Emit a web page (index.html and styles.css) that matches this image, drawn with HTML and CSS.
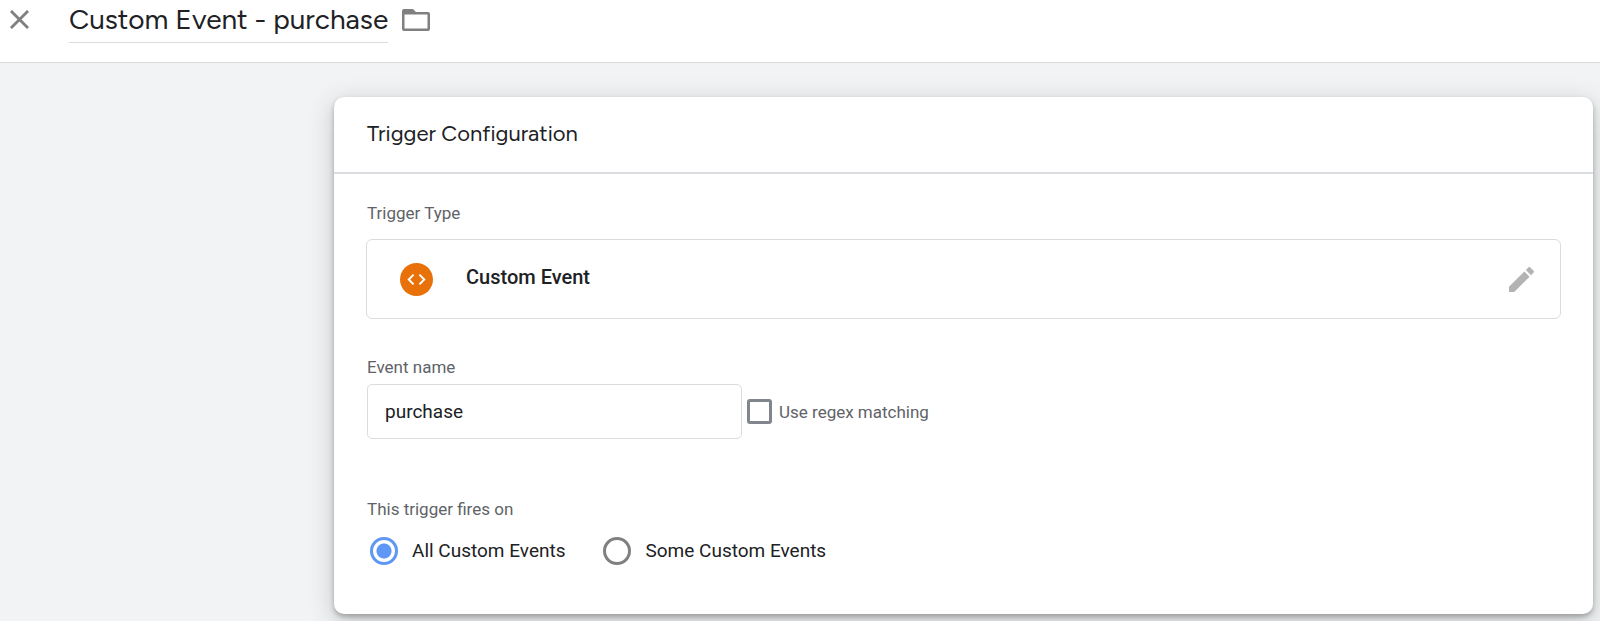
FILE: index.html
```html
<!DOCTYPE html>
<html lang="en">
<head>
<meta charset="utf-8">
<meta name="viewport" content="width=device-width, initial-scale=1">
<title>Custom Event - purchase</title>
<link rel="stylesheet" href="styles.css">
</head>
<body>
<header class="topbar">
  <button class="icon-button" type="button" aria-label="Close">
    <svg class="close-icon" viewBox="0 0 20 20" aria-hidden="true"><path d="M1 1L19 19M19 1L1 19"/></svg>
  </button>
  <h1 class="title">Custom Event - purchase</h1>
  <button class="icon-button" type="button" aria-label="Move to folder">
    <svg class="folder-icon" viewBox="0 0 28 22" aria-hidden="true"><path fill-rule="evenodd" d="M2 0H11L14 3H26Q28 3 28 5V20Q28 22 26 22H2Q0 22 0 20V2Q0 0 2 0ZM2.5 5.5V19.5H25.5V5.5Z"/></svg>
  </button>
</header>
<main class="page">
  <section class="card">
    <h2 class="card-title">Trigger Configuration</h2>
    <form class="card-body">
      <p class="label">Trigger Type</p>
      <button class="type-box" type="button">
        <svg class="type-icon" viewBox="0 0 34 34" aria-hidden="true"><circle cx="17" cy="17" r="17"/><path d="M14 12L9 17L14 22M20 12L25 17L20 22"/></svg>
        <span class="type-name">Custom Event</span>
        <svg class="edit-icon" viewBox="3 3 18 18" aria-hidden="true"><path d="M3 17.25V21h3.75L17.81 9.94l-3.75-3.75L3 17.25zM20.71 7.04c.39-.39.39-1.02 0-1.41l-2.34-2.34c-.39-.39-1.02-.39-1.41 0l-1.83 1.83 3.75 3.75 1.83-1.83z"/></svg>
      </button>
      <label class="label" for="event-name">Event name</label>
      <div class="event-row">
        <input class="text-input" id="event-name" type="text" value="purchase">
        <input class="checkbox" id="regex" type="checkbox">
        <label class="label" for="regex">Use regex matching</label>
      </div>
      <fieldset class="fires">
        <legend class="label">This trigger fires on</legend>
        <div class="options">
          <label class="option"><input class="radio" type="radio" name="fires" checked>All Custom Events</label>
          <label class="option"><input class="radio" type="radio" name="fires">Some Custom Events</label>
        </div>
      </fieldset>
    </form>
  </section>
</main>
</body>
</html>
```
FILE: styles.css
```css
* {
  box-sizing: border-box;
}

body {
  display: flex;
  flex-direction: column;
  min-height: 100vh;
  margin: 0;
  background: #f1f3f4;
  color: #202124;
  font: 19px/24px Roboto, sans-serif;
}

button {
  border: 0;
  padding: 0;
  background: none;
  color: inherit;
  font: inherit;
  cursor: pointer;
}

svg {
  display: block;
}

.topbar {
  display: flex;
  align-items: flex-start;
  padding: 0 10px 19px;
  border-bottom: 1px solid #dadce0;
  background: #fff;
}

.icon-button {
  display: flex;
  align-items: center;
  height: 39px;
}

.close-icon {
  width: 19px;
  height: 19px;
  fill: none;
  stroke: #808080;
  stroke-width: 3;
}

.title {
  margin: 0 14px 0 40px;
  padding-bottom: 4px;
  border-bottom: 1px solid #dadce0;
  font: 400 28px/38px Figtree, Lato, sans-serif;
}

.folder-icon {
  width: 28px;
  height: 22px;
  fill: #808080;
}

.page {
  flex: 1;
  padding: 34px 7px 6px 334px;
}

.card {
  border-radius: 10px;
  background: #fff;
  box-shadow: 0 3px 5px rgba(0, 0, 0, 0.25), 0 6px 24px rgba(60, 64, 67, 0.25);
}

.card-title {
  margin: 0;
  padding: 21px 33px 22px;
  border-bottom: 2px solid #dadce0;
  font: 400 22px/32px Figtree, Lato, sans-serif;
}

.card-body {
  padding: 27px 32px 49px;
}

.label {
  display: block;
  margin: 0;
  padding: 0 1px;
  color: #5f6368;
  font-size: 17px;
  line-height: 24px;
}

.type-box {
  display: flex;
  align-items: center;
  width: 100%;
  height: 80px;
  margin: 14px 0 36px;
  padding: 0 26px 0 33px;
  border: 1px solid #dadce0;
  border-radius: 6px;
}

.type-icon {
  width: 33px;
  height: 33px;
  margin-right: 33px;
  fill: #e8710a;
}

.type-icon path {
  fill: none;
  stroke: #fff;
  stroke-width: 2;
}

.type-name {
  padding-bottom: 4px;
  font-size: 20px;
  font-weight: 500;
}

.edit-icon {
  width: 25px;
  height: 25px;
  margin-left: auto;
  fill: #b3b3b3;
}

.event-row {
  display: flex;
  align-items: center;
  margin: 5px 1px 0;
}

.text-input {
  width: 375px;
  height: 55px;
  padding: 0 17px;
  border: 1px solid #dadce0;
  border-radius: 5px;
  background: #fff;
  color: inherit;
  font: inherit;
}

.checkbox {
  appearance: none;
  width: 25px;
  height: 25px;
  margin: 0 6px 0 5px;
  border: 3px solid #80868b;
  border-radius: 3px;
}

.checkbox:checked {
  background: #4285f4;
}

.fires {
  margin: 58px 0 0;
  padding: 0;
  border: 0;
}

.options {
  display: flex;
  gap: 38px;
  margin-top: 16px;
  padding-left: 4px;
}

.option {
  display: flex;
  align-items: center;
  gap: 14px;
}

.radio {
  appearance: none;
  width: 28px;
  height: 28px;
  margin: 0;
  border: 3px solid #808080;
  border-radius: 50%;
}

.radio:checked {
  border-color: #5e97f6;
  background: radial-gradient(circle, #5e97f6 7px, #fff 8px);
}
```
